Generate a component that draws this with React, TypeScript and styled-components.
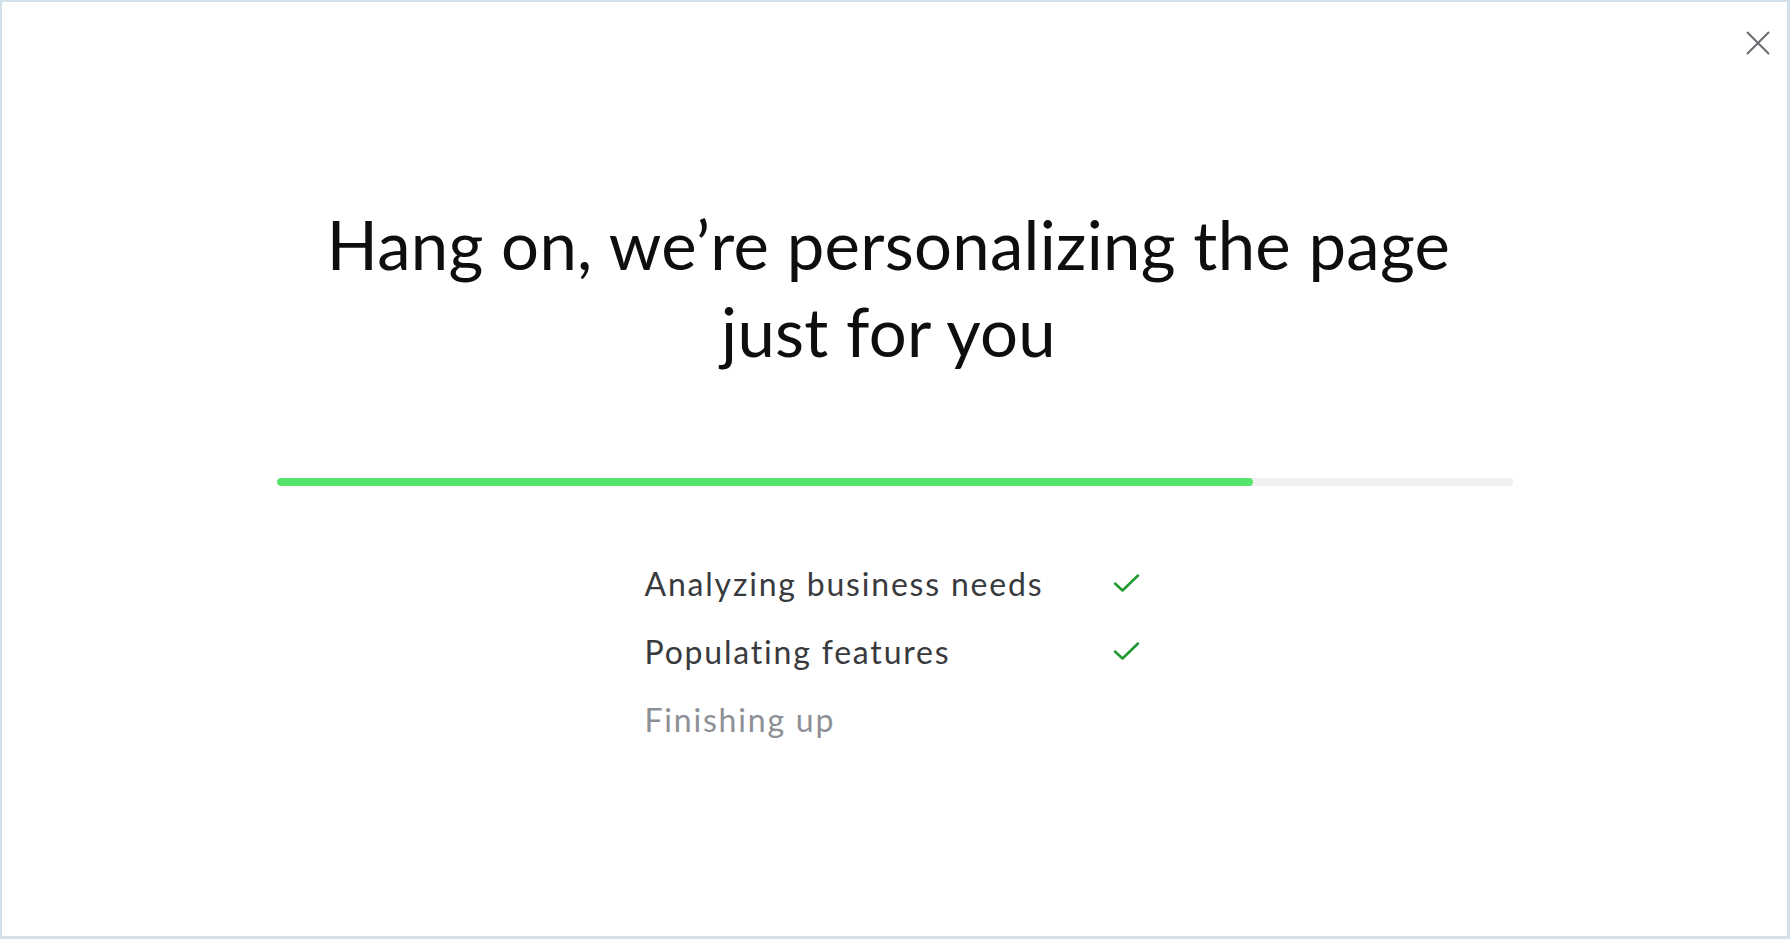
import styled, { createGlobalStyle } from "styled-components"

const GlobalStyle = createGlobalStyle`
    * {
        box-sizing: border-box;
    }

    body {
        margin: 0;
        background: #ffffff;
        font-family: Lato, "Noto Sans", sans-serif;
    }
`

const steps = [
    { label: "Analyzing business needs", done: true },
    { label: "Populating features", done: true },
    { label: "Finishing up", done: false },
]

const progress = 79

const CheckIcon = () => (
    <svg width="27" height="20" viewBox="0 0 27 20" fill="none">
        <path d="M2 10.5 L9.5 17.5 L25 2.5" stroke="#1f9a31" strokeWidth="2.5" strokeLinecap="round" strokeLinejoin="round" />
    </svg>
)

const CloseIcon = () => (
    <svg width="24" height="24" viewBox="0 0 24 24" fill="none">
        <path d="M1.5 1.5 L22.5 22.5 M22.5 1.5 L1.5 22.5" stroke="#6b6c72" strokeWidth="2" strokeLinecap="round" />
    </svg>
)

export default function App() {
    return (
        <>
            <GlobalStyle />
            <Page>
                <CloseButton aria-label="Close">
                    <CloseIcon />
                </CloseButton>
                <Title>
                    Hang on, we’re personalizing the page
                    <br />
                    just for you
                </Title>
                <Track>
                    <Fill style={{ width: `${progress}%` }} />
                </Track>
                <StepList>
                    {steps.map((step) => (
                        <Step key={step.label} $done={step.done}>
                            <span>{step.label}</span>
                            {step.done && <CheckIcon />}
                        </Step>
                    ))}
                </StepList>
            </Page>
        </>
    )
}

const Page = styled.div`
    position: relative;
    width: 100vw;
    height: 100vh;
    border-style: solid;
    border-color: #d2e0e9;
    border-width: 2px 3px 3px 2px;
    display: flex;
    flex-direction: column;
    align-items: center;
    padding-top: 199px;
`

const CloseButton = styled.button`
    position: absolute;
    top: 29px;
    right: 17px;
    width: 24px;
    height: 24px;
    padding: 0;
    border: none;
    background: none;
    cursor: pointer;
    display: flex;
`

const Title = styled.h1`
    margin: 0 12px 0 0;
    font-size: 67px;
    line-height: 87px;
    font-weight: 400;
    color: #0d0e10;
    text-align: center;
    letter-spacing: 0.3px;
`

const Track = styled.div`
    width: 1236px;
    height: 8px;
    margin-top: 103px;
    border-radius: 4px;
    background: #f1f1f1;
    overflow: hidden;
`

const Fill = styled.div`
    height: 100%;
    border-radius: 4px;
    background: #56e36c;
`

const StepList = styled.ul`
    list-style: none;
    margin: 63px 0 0;
    padding: 0 5px 0 0;
    width: 500px;
`

const Step = styled.li<{ $done: boolean }>`
    display: flex;
    align-items: center;
    justify-content: space-between;
    height: 68px;
    font-size: 32px;
    letter-spacing: 1.8px;
    color: ${(p) => (p.$done ? "#393a3d" : "#8d9096")};
`
